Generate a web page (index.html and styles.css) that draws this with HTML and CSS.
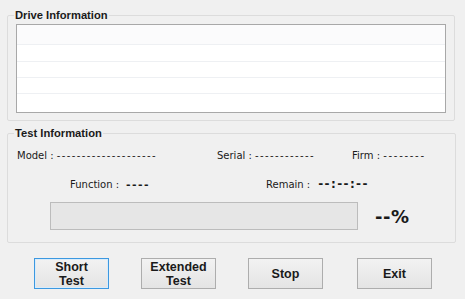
FILE: index.html
```html
<!DOCTYPE html>
<html>
<head>
<meta charset="utf-8">
<link rel="stylesheet" href="styles.css">
</head>
<body>
<div class="window">
  <fieldset class="group drive">
    <legend>Drive Information</legend>
    <div class="listbox">
      <div class="row r1"></div>
      <div class="row r2"></div>
      <div class="row r3"></div>
      <div class="row r4"></div>
    </div>
  </fieldset>
  <fieldset class="group test">
    <legend>Test Information</legend>
    <div class="info-row first">
      <span class="field">Model : <span class="dash">--------------------</span></span>
      <span class="field">Serial : <span class="dash">------------</span></span>
      <span class="field">Firm : <span class="dash firm">--------</span></span>
    </div>
    <div class="info-row second">
      <span class="field"><span class="lbl">Function :</span><b class="val">----</b></span>
      <span class="field"><span class="lbl">Remain :</span><b class="val time">--:--:--</b></span>
    </div>
    <div class="progress-row">
      <div class="progress"></div>
      <span class="pct">--%</span>
    </div>
  </fieldset>
  <div class="buttons">
    <button class="btn focused">Short<br>Test</button>
    <button class="btn">Extended<br>Test</button>
    <button class="btn">Stop</button>
    <button class="btn exit">Exit</button>
  </div>
</div>
</body>
</html>
```
FILE: styles.css
```css
html, body {
  margin: 0;
  padding: 0;
  background: #f0f0f0;
}
body {
  width: 465px;
  height: 299px;
  overflow: hidden;
  font-family: "DejaVu Sans", "Liberation Sans", sans-serif;
  font-size: 10px;
  color: #1a1a1a;
}
.window {
  padding-top: 9px;
}
.group {
  margin: 0 0 0 7px;
  border: 1px solid #dcdcdc;
  border-radius: 2px;
  padding: 0;
  box-sizing: border-box;
}
.group legend {
  font-family: "Liberation Sans", Arial, sans-serif;
  font-weight: bold;
  font-size: 11.2px;
  padding: 0 1px;
  color: #1a1a1a;
  line-height: 12px;
}
.drive {
  width: 448px;
  height: 112px;
  padding: 3px 8px 0 8px;
}
.drive legend { margin-left: -2px; }
.listbox {
  height: 89px;
  background: #fff;
  border: 1px solid #a8a8a8;
  box-sizing: border-box;
}
.row {
  border-bottom: 1px solid #eef0f3;
  box-sizing: border-box;
}
.r1 { height: 20px; background: #fbfbfc; }
.r2 { height: 17px; }
.r3 { height: 16px; }
.r4 { height: 16px; }
.test {
  margin-top: 6px;
  width: 449px;
  height: 116px;
  padding: 0 0 0 9px;
}
.test legend { margin-left: -3px; }
.info-row {
  display: grid;
  align-items: center;
  height: 14px;
}
.info-row.first {
  margin-top: 9px;
  grid-template-columns: 200px 135px auto;
}
.dash { letter-spacing: 1.4px; }
.dash.firm { letter-spacing: 1.7px; }
.info-row.second {
  margin-top: 15px;
  padding-left: 53px;
  grid-template-columns: 196px auto;
}
.lbl { margin-right: 7px; }
.val { font-size: 11px; letter-spacing: 1.4px; }
.val.time { font-size: 12px; letter-spacing: 1.4px; margin-left: 1px; }
.progress-row {
  display: flex;
  align-items: center;
  margin-top: 11px;
  padding-left: 33px;
}
.progress {
  width: 308px;
  height: 28px;
  box-sizing: border-box;
  background: #e6e6e6;
  border: 1px solid #bcbcbc;
}
.pct {
  margin-left: 17px;
  font-weight: bold;
  font-size: 18px;
  letter-spacing: 0.5px;
}
.buttons {
  display: flex;
  margin-top: 15px;
  padding-left: 34px;
  gap: 32px;
}
.btn {
  width: 75px;
  height: 31px;
  box-sizing: border-box;
  border: 1px solid #adadad;
  background: linear-gradient(#f2f2f2, #e4e4e4);
  font-family: "Liberation Sans", Arial, sans-serif;
  font-weight: bold;
  font-size: 12.5px;
  line-height: 14px;
  color: #1a1a1a;
  padding: 0;
  margin: 0;
}
.btn.exit { margin-left: 2px; }
.btn.focused {
  border-color: #3c98e0;
  box-shadow: inset 0 0 0 1px #d9ecfb;
}
```
